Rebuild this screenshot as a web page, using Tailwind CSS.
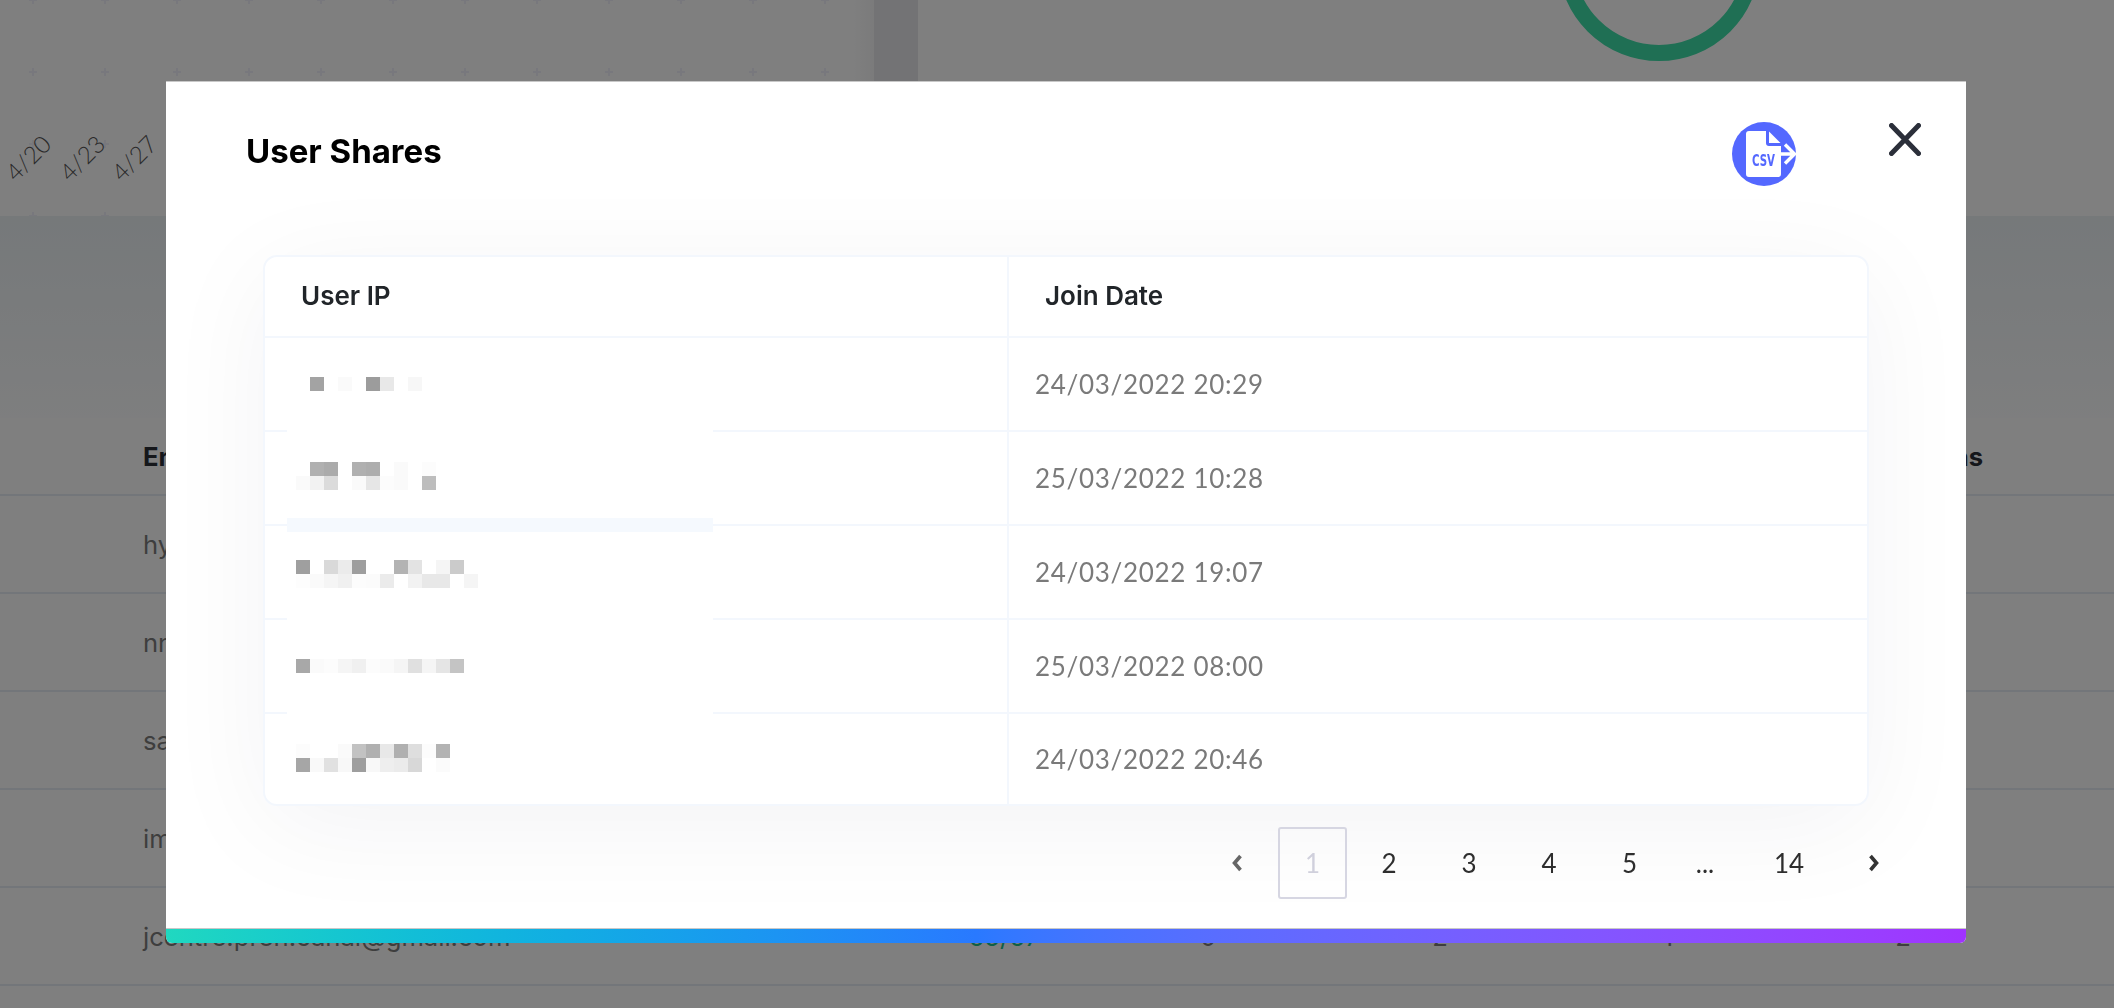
<!DOCTYPE html>
<html lang="en">
<head>
  <meta charset="UTF-8" />
  <title>User Shares</title>
  <script src="https://cdn.jsdelivr.net/npm/@tailwindcss/browser@4"></script>
</head>
<body class="w-[2114px] h-[1008px] overflow-hidden bg-white font-['Lato','Liberation_Sans',sans-serif]">

<!-- page behind the modal -->
<div class="flex flex-col h-full">
  <section class="flex h-[216px] shrink-0">
    <div class="relative w-[852px] shrink-0 overflow-hidden">
      <svg class="w-full h-full" width="852" height="216">
        <defs>
          <pattern id="plus" width="72" height="72" patternUnits="userSpaceOnUse" x="-3" y="0">
            <path d="M36 -4v8M32 0h8M36 68v8M32 72h8" stroke="#f0f0fb" stroke-width="2" fill="none" />
          </pattern>
        </defs>
        <rect width="852" height="216" fill="url(#plus)" />
      </svg>
      <span class="absolute left-[2px] top-[143px] text-[24px] leading-[30px] font-light text-[#555] -rotate-45">4/20</span>
      <span class="absolute left-[56px] top-[143px] text-[24px] leading-[30px] font-light text-[#555] -rotate-45">4/23</span>
      <span class="absolute left-[108px] top-[143px] text-[24px] leading-[30px] font-light text-[#555] -rotate-45">4/27</span>
    </div>
    <div class="w-[22px] shrink-0 bg-gradient-to-r from-white to-[#f6f6f7]"></div>
    <div class="w-[44px] shrink-0 bg-[#e6e7ea]"></div>
    <div class="relative flex-1 overflow-hidden">
      <div class="absolute left-[640px] top-[-141px] w-[202px] h-[202px] rounded-full border-[16px] border-[#3fdea8]"></div>
    </div>
  </section>

  <div class="h-[202px] shrink-0 bg-gradient-to-b from-[#ecf2f5] to-[#fcfdfe]"></div>

  <section class="flex-1 font-['Inter','Liberation_Sans',sans-serif] text-[25.6px] text-[#7c7c7c]">
    <div class="h-[78px] flex items-center justify-between pt-[2px] pl-[143px] pr-[131px] border-b-2 border-[#e6edf4] font-bold text-[#2a2e36]">
      <span>Email</span><span>Actions</span>
    </div>
    <div class="h-[98px] flex items-center pt-[2px] pl-[143px] border-b-2 border-[#e6edf4]">hyo</div>
    <div class="h-[98px] flex items-center pt-[2px] pl-[143px] border-b-2 border-[#e6edf4]">nnn</div>
    <div class="h-[98px] flex items-center pt-[2px] pl-[143px] border-b-2 border-[#e6edf4]">san</div>
    <div class="h-[98px] flex items-center pt-[2px] pl-[143px] border-b-2 border-[#e6edf4]">imo</div>
    <div class="h-[98px] grid grid-cols-[770px_182px_226px_238px_218px_252px] items-center pt-[2px] pl-[143px] border-b-2 border-[#e6edf4]">
      <span>jcentre.pren.canal@gmail.com</span>
      <span class="text-center text-[#1fc08c]">65/67</span>
      <span class="text-center">0</span>
      <span class="text-center">2</span>
      <span class="text-center">1</span>
      <span class="text-center">2</span>
    </div>
  </section>
</div>

<!-- modal -->
<div class="fixed inset-0 bg-black/50 pt-[81px] pl-[166px]">
  <div class="w-[1800px] bg-white border-t border-[#c8c8c8] rounded-b-[6px] overflow-hidden">
    <div class="h-[846px] flex flex-col">

      <header class="h-[173px] shrink-0 flex items-start pl-[80px] pr-[45px]">
        <h2 class="mt-[48px] font-['Inter','Liberation_Sans',sans-serif] text-[33px] leading-[42px] font-bold text-black">User Shares</h2>
        <button class="ml-auto mt-[40px]">
          <svg width="64" height="64" viewBox="0 0 64 64">
            <circle cx="32" cy="32" r="32" fill="#5468ff" />
            <path d="M17 9h17v12a3 3 0 0 0 3 3h12v28a3 3 0 0 1-3 3H17a3 3 0 0 1-3-3V12a3 3 0 0 1 3-3z" fill="#fff" />
            <path d="M37 9.5L48.5 21H37z" fill="#fff" />
            <path d="M46 32H61M53 22.5L62.5 32L53 41.5" fill="none" stroke="#fff" stroke-width="3.4" />
            <text x="20" y="43.5" textLength="23" lengthAdjust="spacingAndGlyphs" fill="#5468ff" font-family="DejaVu Sans" font-weight="700" font-size="15">CSV</text>
          </svg>
        </button>
        <button class="ml-[93px] mt-[41px]">
          <svg class="block" width="32" height="33" viewBox="0 0 32 33">
            <path d="M2.5 2.5L29.5 30.5M29.5 2.5L2.5 30.5" stroke="#2b2f3a" stroke-width="5" stroke-linecap="round" />
          </svg>
        </button>
      </header>

      <div class="ml-[97px] w-[1606px] h-[551px] shrink-0 bg-white rounded-[14px] border-2 border-[#f3f7fd] shadow-[0_20px_110px_rgba(20,20,60,0.05)]">
        <div class="flex h-[81px] border-b-2 border-[#f3f7fd] font-['Inter','Liberation_Sans',sans-serif] text-[26px] font-semibold text-[#212529]">
          <div class="w-[742px] flex items-center pl-[36px] pb-[2px]">User IP</div>
          <div class="flex-1 flex items-center pl-[36px] pb-[2px] border-l-2 border-[#f3f7fd]">Join Date</div>
        </div>
        <div id="rows"></div>
      </div>

      <nav class="mt-[21px] pr-[58px] flex justify-end items-center h-[72px] text-[26px] text-[#2e2e2e]">
        <button class="w-[82px] flex justify-center">
          <svg width="13" height="18" viewBox="0 0 13 18"><path d="M9.5 2L3.5 9l6 7" fill="none" stroke="#666" stroke-width="3.6" /></svg>
        </button>
        <button class="w-[69px] h-[72px] mr-[2px] border-2 border-[#d6d6e2] rounded-[3px] text-[#d0d0dc]">1</button>
        <button class="w-[80px]">2</button>
        <button class="w-[80px]">3</button>
        <button class="w-[80px]">4</button>
        <button class="w-[81px]">5</button>
        <span class="w-[70px] text-center">...</span>
        <button class="w-[98px]">14</button>
        <button class="w-[70px] flex justify-center">
          <svg width="13" height="18" viewBox="0 0 13 18"><path d="M3.5 2l6 7-6 7" fill="none" stroke="#333" stroke-width="3.6" /></svg>
        </button>
      </nav>
    </div>
    <div class="h-[15px] border-t border-[#c8c8c8] bg-gradient-to-r from-[#20d8c0] via-[#2979ff] via-45% to-[#a033ff]"></div>
  </div>
</div>

<script>
/* blurred IPs: one array per pixel line, "" = empty square */
const ROWS = [
  {date:"24/03/2022 20:29", pad:"pt-[39px]", line:"bottom-[-4px] h-[8px] bg-white", px:[
    ["","#a3a3a3","","#fafafa","","#9c9c9c","#e8e8e8","","#f7f7f7"]]},
  {date:"25/03/2022 10:28", pad:"pt-[30px]", line:"bottom-[-8px] h-[14px] bg-[#f5f9fe]", px:[
    ["","#b0b0b0","#ababab","","#b0b0b0","#adadad","","#fafafa","","#fcfcfc"],
    ["#fafafa","#f2f2f2","#dbdbdb","","#fafafa","#e6e6e6","#fcfcfc","#fafafa","","#bdbdbd"]]},
  {date:"24/03/2022 19:07", pad:"pt-[34px]", line:"bottom-[-4px] h-[8px] bg-white", px:[
    ["#9f9f9f","","#d9d9d9","#ebebeb","#9e9e9e","","","#b3b3b3","#e3e3e3","","#f5f5f5","#cbcbcb",""],
    ["#fdfdfd","#fafafa","#f5f5f5","#f0f0f0","#fcfcfc","#fbfbfb","#ebebeb","","#f2f2f2","#e8e8e8","#e8e8e8","","#f5f5f5"]]},
  {date:"25/03/2022 08:00", pad:"pt-[39px]", line:"bottom-[-4px] h-[8px] bg-white", px:[
    ["#a8a8a8","#fafafa","#fcfcfc","#f5f5f5","#f0f0f0","#fcfcfc","#fafafa","#f5f5f5","#e0e0e0","#f5f5f5","#e5e5e5","#c4c4c4"]]},
  {date:"24/03/2022 20:46", pad:"pt-[30px]", line:"hidden", px:[
    ["#fcfcfc","","","#fafafa","#c2c2c2","#b0b0b0","#e8e8e8","#b0b0b0","#dedede","#fcfcfc","#b3b3b3"],
    ["#a6a6a6","#f9f9f9","#e1e1e1","#f8f8f8","#9e9e9e","#f8f8f8","#eeeeee","#ebebeb","#d8d8d8","","#fbfbfb"]]},
];

document.getElementById("rows").innerHTML = ROWS.map((r,i)=>`
  <div class="relative flex ${i<4 ? "h-[94px] border-b-2 border-[#f3f7fd]" : "h-[90px]"}">
    <div class="w-[742px] pl-[31px] ${r.pad}">
      ${r.px.map(l=>`<div class="flex h-[14px]">${
        l.map(c=>`<span class="w-[14px] h-[14px]" style="background-color:${c||"transparent"}"></span>`).join("")
      }</div>`).join("")}
    </div>
    <div class="flex-1 flex items-center pl-[26px] border-l-2 border-[#f3f7fd] text-[26px] tracking-[0.7px] text-[#7a7a7a]">${r.date}</div>
    <div class="absolute left-[22px] w-[426px] ${r.line}"></div>
  </div>`).join("");
</script>
</body>
</html>
